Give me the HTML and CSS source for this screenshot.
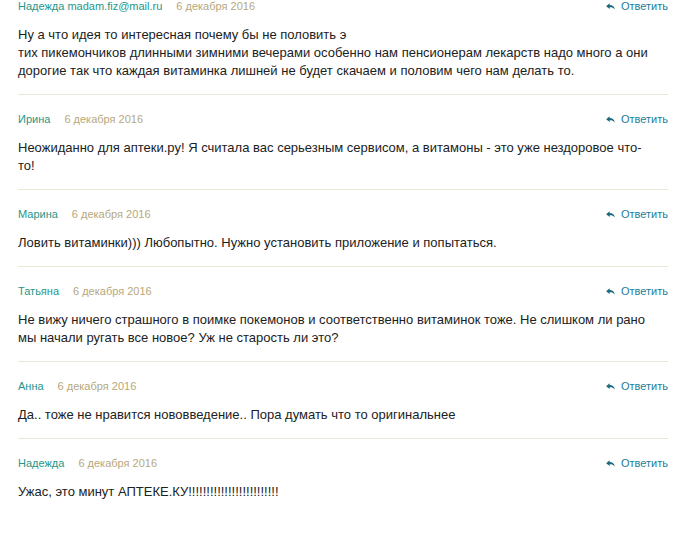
FILE: index.html
```html
<!DOCTYPE html>
<html lang="ru">

<head>
    <meta charset="UTF-8">
    <meta name="viewport" content="width=device-width, initial-scale=1.0">
    <title>Комментарии</title>
    <link rel="stylesheet" href="styles.css">
</head>

<body>

    <div class="comments">

        <div class="comment">
            <div class="comment-head">
                <span class="author">Надежда madam.fiz@mail.ru</span>
                <span class="date">6 декабря 2016</span>
                <a class="reply" href="#">
                    <svg class="reply-icon" viewBox="0 0 10 8" width="9" height="7"><path d="M0 3.6 L4 0.4 V2.4 C7.4 2.4 9.6 4.2 9.8 7.6 C8.6 5.6 6.8 4.9 4 4.9 V6.8 Z" /></svg>
                    Ответить
                </a>
            </div>
            <p class="comment-text">Ну а что идея то интересная почему бы не половить э<br>тих пикемончиков длинными зимними вечерами особенно нам пенсионерам лекарств надо много а они дорогие так что каждая витаминка лишней не будет скачаем и половим чего нам делать то.</p>
        </div>

        <div class="comment">
            <div class="comment-head">
                <span class="author">Ирина</span>
                <span class="date">6 декабря 2016</span>
                <a class="reply" href="#">
                    <svg class="reply-icon" viewBox="0 0 10 8" width="9" height="7"><path d="M0 3.6 L4 0.4 V2.4 C7.4 2.4 9.6 4.2 9.8 7.6 C8.6 5.6 6.8 4.9 4 4.9 V6.8 Z" /></svg>
                    Ответить
                </a>
            </div>
            <p class="comment-text">Неожиданно для аптеки.ру! Я считала вас серьезным сервисом, а витамоны - это уже нездоровое что-<br>то!</p>
        </div>

        <div class="comment">
            <div class="comment-head">
                <span class="author">Марина</span>
                <span class="date">6 декабря 2016</span>
                <a class="reply" href="#">
                    <svg class="reply-icon" viewBox="0 0 10 8" width="9" height="7"><path d="M0 3.6 L4 0.4 V2.4 C7.4 2.4 9.6 4.2 9.8 7.6 C8.6 5.6 6.8 4.9 4 4.9 V6.8 Z" /></svg>
                    Ответить
                </a>
            </div>
            <p class="comment-text">Ловить витаминки))) Любопытно. Нужно установить приложение и попытаться.</p>
        </div>

        <div class="comment">
            <div class="comment-head">
                <span class="author">Татьяна</span>
                <span class="date">6 декабря 2016</span>
                <a class="reply" href="#">
                    <svg class="reply-icon" viewBox="0 0 10 8" width="9" height="7"><path d="M0 3.6 L4 0.4 V2.4 C7.4 2.4 9.6 4.2 9.8 7.6 C8.6 5.6 6.8 4.9 4 4.9 V6.8 Z" /></svg>
                    Ответить
                </a>
            </div>
            <p class="comment-text">Не вижу ничего страшного в поимке покемонов и соответственно витаминок тоже. Не слишком ли рано мы начали ругать все новое? Уж не старость ли это?</p>
        </div>

        <div class="comment">
            <div class="comment-head">
                <span class="author">Анна</span>
                <span class="date">6 декабря 2016</span>
                <a class="reply" href="#">
                    <svg class="reply-icon" viewBox="0 0 10 8" width="9" height="7"><path d="M0 3.6 L4 0.4 V2.4 C7.4 2.4 9.6 4.2 9.8 7.6 C8.6 5.6 6.8 4.9 4 4.9 V6.8 Z" /></svg>
                    Ответить
                </a>
            </div>
            <p class="comment-text">Да.. тоже не нравится нововведение.. Пора думать что то оригинальнее</p>
        </div>

        <div class="comment">
            <div class="comment-head">
                <span class="author">Надежда</span>
                <span class="date">6 декабря 2016</span>
                <a class="reply" href="#">
                    <svg class="reply-icon" viewBox="0 0 10 8" width="9" height="7"><path d="M0 3.6 L4 0.4 V2.4 C7.4 2.4 9.6 4.2 9.8 7.6 C8.6 5.6 6.8 4.9 4 4.9 V6.8 Z" /></svg>
                    Ответить
                </a>
            </div>
            <p class="comment-text">Ужас, это минут АПТЕКЕ.КУ!!!!!!!!!!!!!!!!!!!!!!!!!</p>
        </div>

    </div>

</body>

</html>
```

FILE: styles.css
```css
body {
    font-family: 'Liberation Sans', Arial, sans-serif;
    background-color: #ffffff;
    color: #1b2222;
    margin: 0;
    padding: 0;
}

.comments {
    width: 650px;
    margin-left: 18px;
    margin-top: -1px;
}

.comment {
    padding: 17px 0 14px;
    border-bottom: 1px solid #e9e8d4;
}

.comment:first-child {
    padding-top: 0;
}

.comment:last-child {
    border-bottom: none;
}

.comment-head {
    display: flex;
    align-items: center;
    font-size: 11px;
    line-height: 14px;
}

.author {
    color: #26968a;
    margin-right: 14px;
}

.date {
    color: #b7a77c;
}

.reply {
    margin-left: auto;
    display: flex;
    align-items: center;
    color: #237d96;
    text-decoration: none;
}

.reply-icon {
    fill: #1d6a80;
    margin-right: 6px;
}

.comment-text {
    font-size: 13px;
    line-height: 18px;
    margin: 13px 0 0;
    padding-right: 16px;
}
```
